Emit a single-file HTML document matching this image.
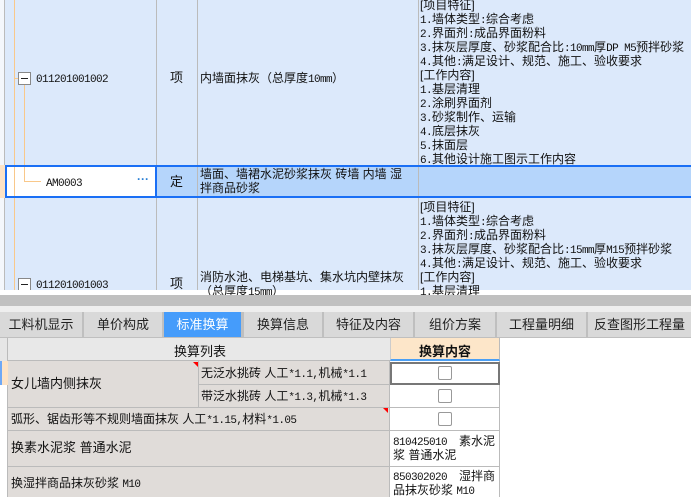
<!DOCTYPE html>
<html><head><meta charset="utf-8"><style>
*{margin:0;padding:0;box-sizing:border-box}
body{width:691px;height:497px;overflow:hidden;background:#fff;font-family:"Liberation Sans","Noto Sans CJK SC",sans-serif;font-size:12px;color:#111;position:relative}
.a{position:absolute}
.t{position:absolute;white-space:nowrap;line-height:14px}
.m{font-family:"Liberation Mono",monospace;font-size:11px;letter-spacing:-0.6px;line-height:0}
.tab{position:absolute;top:312px;height:25px;background:#d9d9d9;font-size:13px;line-height:25px;text-align:center;color:#222}
.cb{position:absolute;width:14px;height:14px;border:1px solid #999;border-radius:2px;background:#fff}
</style></head><body>
<div class="a" style="left:0;top:0;width:691px;height:290px;background:#dce9fb"></div>
<div class="a" style="left:0;top:0;width:5px;height:290px;background:#f4f7fc;border-right:1px solid #bbb"></div>
<div class="a" style="left:156px;top:0;width:1px;height:290px;background:#bbb"></div>
<div class="a" style="left:197px;top:0;width:1px;height:290px;background:#bbb"></div>
<div class="a" style="left:418px;top:0;width:1px;height:290px;background:#bbb"></div>
<div class="a" style="left:14px;top:0;width:1px;height:290px;background:#f9c88a"></div>
<div class="a" style="left:15px;top:78px;width:4px;height:1px;background:#f9c88a"></div>
<div class="a" style="left:24px;top:85px;width:1px;height:97px;background:#f9c88a"></div>
<div class="a" style="left:24px;top:181px;width:17px;height:1px;background:#f9c88a"></div>
<div class="a" style="left:18px;top:72px;width:13px;height:13px;border:1px solid #888;background:#fff"></div>
<div class="a" style="left:21px;top:78px;width:7px;height:1px;background:#222"></div>
<div class="a" style="left:18px;top:278px;width:13px;height:12px;border:1px solid #888;border-bottom:none;background:#fff"></div>
<div class="a" style="left:21px;top:284px;width:7px;height:1px;background:#222"></div>
<div class="t" style="left:36px;top:71px"><span class="m">011201001002</span></div>
<div class="t" style="left:36px;top:277px"><span class="m">011201001003</span></div>
<div class="t" style="left:170px;top:71px;font-size:13px">项</div>
<div class="t" style="left:170px;top:277px;font-size:13px">项</div>
<div class="t" style="left:200px;top:71px">内墙面抹灰（总厚度<span class="m">10mm</span>）</div>
<div class="t" style="left:200px;top:270px">消防水池、电梯基坑、集水坑内壁抹灰</div>
<div class="t" style="left:200px;top:284px">（总厚度<span class="m">15mm</span>）</div>
<div class="t" style="left:420px;top:-2px">[项目特征]<br><span class="m">1.</span>墙体类型<span class="m">:</span>综合考虑<br><span class="m">2.</span>界面剂<span class="m">:</span>成品界面粉料<br><span class="m">3.</span>抹灰层厚度、砂浆配合比<span class="m">:10mm</span>厚<span class="m">DP M5</span>预拌砂浆<br><span class="m">4.</span>其他<span class="m">:</span>满足设计、规范、施工、验收要求<br>[工作内容]<br><span class="m">1.</span>基层清理<br><span class="m">2.</span>涂刷界面剂<br><span class="m">3.</span>砂浆制作、运输<br><span class="m">4.</span>底层抹灰<br><span class="m">5.</span>抹面层<br><span class="m">6.</span>其他设计施工图示工作内容</div>
<div class="t" style="left:420px;top:200px">[项目特征]<br><span class="m">1.</span>墙体类型<span class="m">:</span>综合考虑<br><span class="m">2.</span>界面剂<span class="m">:</span>成品界面粉料<br><span class="m">3.</span>抹灰层厚度、砂浆配合比<span class="m">:15mm</span>厚<span class="m">M15</span>预拌砂浆<br><span class="m">4.</span>其他<span class="m">:</span>满足设计、规范、施工、验收要求<br>[工作内容]<br><span class="m">1.</span>基层清理</div>
<div class="a" style="left:0;top:165px;width:5px;height:33px;background:#fde3c6"></div>
<div class="a" style="left:5px;top:165px;width:686px;height:33px;background:#b5d5fb;border-top:2px solid #1a6ff5;border-bottom:2px solid #1a6ff5"></div>
<div class="a" style="left:5px;top:165px;width:152px;height:33px;background:#fff;border:2px solid #1a6ff5"></div>
<div class="a" style="left:14px;top:167px;width:1px;height:29px;background:#f9c88a"></div>
<div class="a" style="left:24px;top:167px;width:1px;height:15px;background:#f9c88a"></div>
<div class="a" style="left:24px;top:181px;width:17px;height:1px;background:#f9c88a"></div>
<div class="a" style="left:197px;top:167px;width:1px;height:29px;background:#bbb"></div>
<div class="a" style="left:418px;top:167px;width:1px;height:29px;background:#bbb"></div>
<div class="t" style="left:46px;top:175px"><span class="m">AM0003</span></div>
<div class="t" style="left:137px;top:172px;color:#2a7fd4;font-weight:bold">···</div>
<div class="t" style="left:170px;top:175px;font-size:13px">定</div>
<div class="t" style="left:200px;top:167px">墙面、墙裙水泥砂浆抹灰 砖墙 内墙 湿<br>拌商品砂浆</div>
<div class="a" style="left:0;top:295px;width:691px;height:11px;background:#c0c0c0"></div>
<div class="a" style="left:0;top:306px;width:691px;height:32px;background:#bfbfbf"></div>
<div class="a" style="left:0;top:306px;width:691px;height:6px;background:#eeeeee"></div>
<div class="tab" style="left:0;width:82px">工料机显示</div>
<div class="tab" style="left:84px;width:78px">单价构成</div>
<div class="tab" style="left:164px;width:77px;background:#459cfb;color:#fff">标准换算</div>
<div class="tab" style="left:244px;width:78px">换算信息</div>
<div class="tab" style="left:324px;width:89px">特征及内容</div>
<div class="tab" style="left:415px;width:80px">组价方案</div>
<div class="tab" style="left:497px;width:89px">工程量明细</div>
<div class="tab" style="left:588px;width:103px">反查图形工程量</div>
<div class="a" style="left:0;top:338px;width:691px;height:159px;background:#fff"></div>
<div class="a" style="left:0;top:338px;width:8px;height:159px;background:#fff;border-right:1px solid #bbb"></div>
<div class="a" style="left:0;top:338px;width:8px;height:23px;background:#e6e6e6;border-right:1px solid #bbb"></div>
<div class="a" style="left:0;top:361px;width:2px;height:24px;background:#6fa8f5"></div>
<div class="a" style="left:2px;top:361px;width:6px;height:24px;background:#fde3c6"></div>
<div class="a" style="left:8px;top:338px;width:382px;height:23px;background:#e8e8e8;border-bottom:1px solid #bbb"></div>
<div class="t" style="left:174px;top:345px;font-size:13px">换算列表</div>
<div class="a" style="left:390px;top:338px;width:110px;height:23px;background:#fde6c9;border-left:1px solid #ccc;border-right:1px solid #bbb;border-bottom:2px solid #4a9ff5"></div>
<div class="t" style="left:419px;top:345px;font-size:13px;font-weight:bold">换算内容</div>
<div class="a" style="left:8px;top:361px;width:382px;height:136px;background:#e0dcd9"></div>
<div class="a" style="left:8px;top:407px;width:382px;height:1px;background:#bbb"></div>
<div class="a" style="left:8px;top:430px;width:382px;height:1px;background:#bbb"></div>
<div class="a" style="left:8px;top:466px;width:382px;height:1px;background:#bbb"></div>
<div class="a" style="left:198px;top:361px;width:1px;height:46px;background:#bbb"></div>
<div class="a" style="left:198px;top:384px;width:192px;height:1px;background:#bbb"></div>
<div class="a" style="left:389px;top:361px;width:1px;height:136px;background:#bbb"></div>
<div class="a" style="left:499px;top:361px;width:1px;height:136px;background:#bbb"></div>
<div class="a" style="left:390px;top:407px;width:110px;height:1px;background:#bbb"></div>
<div class="a" style="left:390px;top:430px;width:110px;height:1px;background:#bbb"></div>
<div class="a" style="left:390px;top:466px;width:110px;height:1px;background:#bbb"></div>
<div class="a" style="left:193px;top:362px;width:0;height:0;border-top:5px solid #f00;border-left:5px solid transparent"></div>
<div class="a" style="left:383px;top:408px;width:0;height:0;border-top:5px solid #f00;border-left:5px solid transparent"></div>
<div class="t" style="left:11px;top:377px;font-size:13px">女儿墙内侧抹灰</div>
<div class="t" style="left:201px;top:366px">无泛水挑砖 人工<span class="m">*1.1,</span>机械<span class="m">*1.1</span></div>
<div class="t" style="left:201px;top:389px">带泛水挑砖 人工<span class="m">*1.3,</span>机械<span class="m">*1.3</span></div>
<div class="t" style="left:11px;top:412px">弧形、锯齿形等不规则墙面抹灰 人工<span class="m">*1.15,</span>材料<span class="m">*1.05</span></div>
<div class="t" style="left:11px;top:441px;font-size:13px">换素水泥浆 普通水泥</div>
<div class="t" style="left:11px;top:476px">换湿拌商品抹灰砂浆 <span class="m">M10</span></div>
<div class="a" style="left:390px;top:362px;width:110px;height:23px;border:2px solid #777"></div>
<div class="cb" style="left:438px;top:366px"></div>
<div class="cb" style="left:438px;top:389px"></div>
<div class="cb" style="left:438px;top:412px"></div>
<div class="t" style="left:393px;top:434px"><span class="m">810425010</span>　素水泥<br>浆 普通水泥</div>
<div class="t" style="left:393px;top:469px"><span class="m">850302020</span>　湿拌商<br>品抹灰砂浆 <span class="m">M10</span></div>
</body></html>
